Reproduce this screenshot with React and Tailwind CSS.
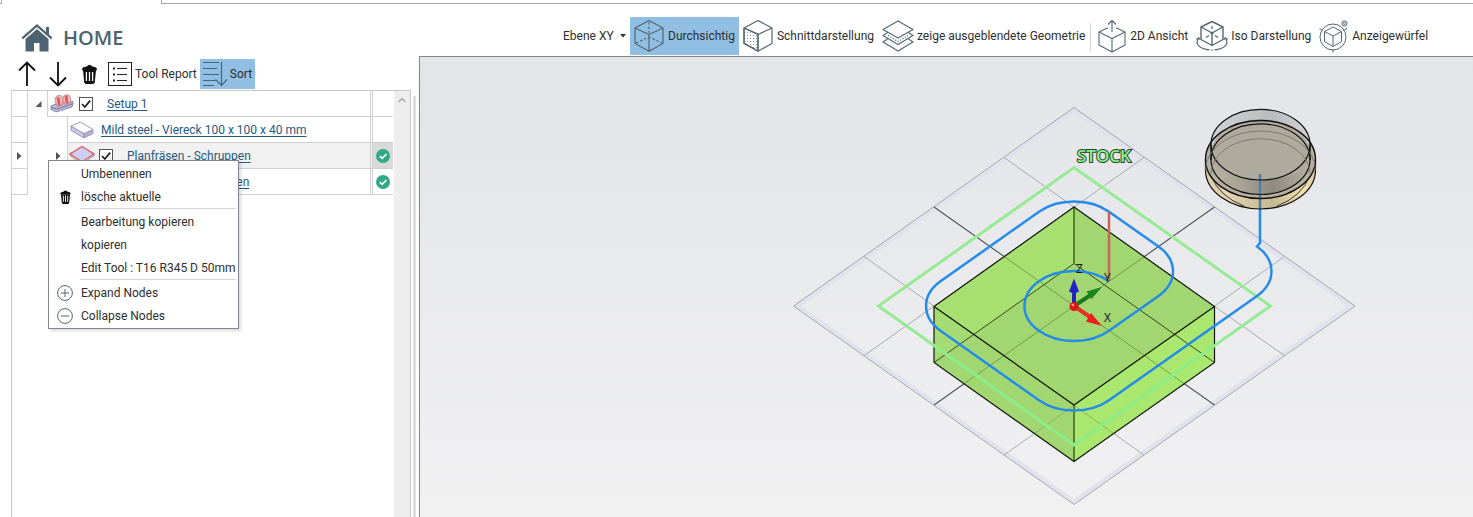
import React from "react";

const SLATE = "#536872";

function HomeIcon() {
  return (
    <svg width="32" height="30" viewBox="0 0 32 30" fill="#4d6470" aria-hidden="true">
      <path d="M16 1 0.5 14.6 2 16.2 16 4 30 16.2 31.5 14.6 28 11.5V4H25V8.9Z" />
      <path d="M16 6 4.5 16V28.5H13V20H18.5V28.5H27.5V16Z" />
    </svg>
  );
}

function ArrowIcon({ down }) {
  return (
    <svg width="18" height="26" viewBox="0 0 18 26" fill="none" stroke="#111" strokeWidth="1.8" aria-hidden="true">
      {down ? <path d="M9 1V24M1 16.5 9 24.5 17 16.5" /> : <path d="M9 25V2M1 9.5 9 1.5 17 9.5" />}
    </svg>
  );
}

function TrashIcon({ small }) {
  return (
    <svg width={small ? 11 : 15} height={small ? 14 : 20} viewBox="0 0 15 20" aria-hidden="true">
      <path d="M5 2.2Q7.5 -.8 10 2.2L14 3.6Q15 4.4 15 6.2H0Q0 4.4 1 3.6Z" fill="#111" />
      <path d="M1 6H14L12.8 18.2Q12.6 20 10.5 20H4.5Q2.4 20 2.2 18.2Z" fill="#111" />
      <path d="M4.4 8V17M7.5 8V17M10.6 8V17" stroke="#fff" strokeWidth="1.3" fill="none" />
    </svg>
  );
}

function ReportIcon() {
  return (
    <svg width="24" height="24" viewBox="0 0 24 24" fill="none" stroke="#222" aria-hidden="true">
      <rect x="0.5" y="0.5" width="23" height="23" />
      <path d="M9 6.5H19M9 12.5H19M9 18.5H19" strokeWidth="1.2" />
      <path d="M5 6.5H7M5 12.5H7M5 18.5H7" strokeWidth="2" />
    </svg>
  );
}

function SortIcon() {
  return (
    <svg width="24" height="26" viewBox="0 0 24 26" fill="none" stroke="#46657c" strokeWidth="1.2" aria-hidden="true">
      <path d="M0 1.5H16M0 7.5H14M0 13.5H16M0 19.5H14M0 24.5H11M18.5 1V24M12.5 18.5 18.5 24.5 24 18.5" />
    </svg>
  );
}

function CubeIcon({ section }) {
  return (
    <svg width="30" height="34" viewBox="0 0 30 34" fill="none" stroke={SLATE} strokeWidth="1.2" strokeLinejoin="round" aria-hidden="true">
      {section && (
        <>
          <defs>
            <pattern id="dots" width="3" height="3" patternUnits="userSpaceOnUse">
              <rect x="1" y="1" width="1" height="1" fill="#8b9aa2" stroke="none" />
            </pattern>
          </defs>
          <path d="M1 9 15 15V32L1 24Z" fill="url(#dots)" />
        </>
      )}
      <path d="M15 1.5 29 9V24.5L15 32.2 1 24.5V9ZM1 9 15 15.5 29 9M15 15.5V32" />
      {!section && <path d="M15 3V14M2 24 15 18 28 24" strokeDasharray="2.5 2" />}
    </svg>
  );
}

function LayersIcon() {
  return (
    <svg width="32" height="32" viewBox="0 0 32 32" fill="none" stroke={SLATE} strokeWidth="1.2" strokeLinejoin="round" aria-hidden="true">
      <path d="M16 1 31 9.5 16 18 1 9.5ZM5.5 12.5 1 15.5 16 24.5 31 15.5 26.5 12.5M5.5 19 1 22 16 31 31 22 26.5 19" />
      <path d="M6 15.5 16 21.5 26 15.5" strokeDasharray="1.2 1.6" />
    </svg>
  );
}

function TopViewIcon() {
  return (
    <svg width="28" height="34" viewBox="0 0 28 34" fill="none" stroke={SLATE} strokeWidth="1.1" strokeLinejoin="round" aria-hidden="true">
      <path d="M10 8.7 1 13V26L14 33 27 26V13L18 8.7M1 13 14 19.5 27 13M14 19.5V33M14 13V1.5M10 5.5 14 1.5 18 5.5" />
    </svg>
  );
}

function IsoIcon() {
  return (
    <svg width="32" height="32" viewBox="0 0 32 32" fill="none" stroke={SLATE} strokeWidth="1.4" strokeLinejoin="round" aria-hidden="true">
      <path d="M16 1.5 27 7V19.5L16 25.5 5 19.5V7ZM5 7 16 13 27 7M16 13V25.5" />
      <path d="M16 6V9M10 17.5 13 15.5M22 17.5 19 15.5" strokeWidth="1.2" />
      <circle cx="16" cy="13" r="1.6" fill={SLATE} stroke="none" />
      <path d="M2.5 18C-1.5 24 3.5 29 13.5 29.8M29.5 18C33.5 24 28.5 29 18.5 29.8M15.3 30H17M0.5 19.5 2.8 17.8 4.2 20M31.5 19.5 29.2 17.8 27.8 20" strokeWidth="1.2" />
    </svg>
  );
}

function ViewCubeIcon() {
  return (
    <svg width="29" height="34" viewBox="0 0 29 34" fill="none" stroke={SLATE} strokeWidth="1" strokeLinejoin="round" aria-hidden="true">
      <circle cx="14" cy="18" r="13" />
      <path d="M14 8 22.5 12.5V22.5L14 27.5 5.5 22.5V12.5ZM5.5 12.5 14 17 22.5 12.5M14 17V27.5M14 30V33.5M0.5 9.5 3.5 11.5M24.5 11.5 28 9.5" />
      <circle cx="25.5" cy="4.5" r="2.6" />
      <circle cx="25.5" cy="4.5" r="1" />
    </svg>
  );
}

function SetupIcon() {
  return (
    <svg width="24" height="19" viewBox="0 0 24 19" aria-hidden="true">
      <path d="M1 12 8 9 23 7.5V10L22 13 6 18 1 15.5Z" fill="#b9b8dd" stroke="#77779b" strokeWidth=".8" />
      <path d="M1.5 13.5 7 15 22.5 10" fill="none" stroke="#66668a" strokeWidth=".8" />
      <path d="M5 4Q7 .5 11 1.5L12.5 4V11L7 12.5Q5 9 5 4Z" fill="#f6bcba" stroke="#a56a70" strokeWidth=".6" />
      <path d="M13 2.5Q15 0 19 1L20.500 3.500V9L15 10.500Q13 7 13 2.500Z" fill="#f6bcba" stroke="#a56a70" strokeWidth=".6" />
      <path d="M6.500 3.500 9.500 3 10.500 11 8 12ZM14.500 2 17.500 1.500 18.500 9 16 10Z" fill="#e4575b" />
    </svg>
  );
}

function StockIcon() {
  return (
    <svg width="24" height="18" viewBox="0 0 24 18" strokeLinejoin="round" aria-hidden="true">
      <path d="M1 5 14 12.500V17L1 9.500Z" fill="#c9c8ea" stroke="#8b8ba6" strokeWidth=".8" />
      <path d="M14 12.500 23 8.500V12.500L14 17Z" fill="#b2b2dc" stroke="#8b8ba6" strokeWidth=".8" />
      <path d="M1 5 10 1 23 8.500 14 12.500Z" fill="#fff" stroke="#8b8ba6" strokeWidth=".8" />
    </svg>
  );
}

function FacingIcon() {
  return (
    <svg width="26" height="19" viewBox="0 0 26 19" strokeLinejoin="round" aria-hidden="true">
      <path d="M1 9.500 13 18.500 25 9.500V7H1Z" fill="#eee" stroke="#8a8a8a" strokeWidth=".8" />
      <path d="M13 0.500 25 8 13 16 1 8Z" fill="#cfcdf1" stroke="#e0525c" strokeWidth="1.2" />
    </svg>
  );
}

function DoneIcon() {
  return (
    <svg width="14" height="14" viewBox="0 0 14 14" role="img" aria-label="OK">
      <circle cx="7" cy="7" r="7" fill="#31a887" />
      <path d="M3.800 7.200 6.200 9.400 10.400 5" fill="none" stroke="#fff" strokeWidth="1.600" />
    </svg>
  );
}

function Triangle({ open }) {
  return (
    <svg width="7" height="8" viewBox="0 0 7 8" fill="#555" aria-hidden="true">
      {open ? <path d="M6.500 1V7H.5Z" /> : <path d="M1 0V8L5.500 4Z" />}
    </svg>
  );
}

function Check({ label }) {
  return (
    <span className="grid h-[14px] w-[14px] shrink-0">
      <input type="checkbox" defaultChecked aria-label={label} className="peer col-start-1 row-start-1 h-[14px] w-[14px] appearance-none border border-[#555] bg-white" />
      <svg viewBox="0 0 14 14" className="pointer-events-none invisible col-start-1 row-start-1 h-[14px] w-[14px] peer-checked:visible" fill="none" stroke="#222" strokeWidth="1.800" aria-hidden="true">
        <path d="M3 7 5.800 10 11.200 3.600" />
      </svg>
    </span>
  );
}

function ToolButton({ icon, children, active, gap = "gap-1" }) {
  return (
    <button type="button" aria-pressed={!!active} className={`flex h-[38px] items-center px-1 whitespace-nowrap ${gap} ${active ? "bg-[#91bfe3]" : ""}`}>
      {icon}
      <span>{children}</span>
    </button>
  );
}

function TreeRow({ level, toggle, icon, check, label, current, done }) {
  const indent = level === 0 ? "ml-[19px]" : "ml-[39px]";
  const toggleWidth = level === 0 ? "w-[19px]" : "w-[39px]";
  return (
    <tr className="h-[26px]">
      <td className="h-[26px] border-x border-b border-[#d0d0d0] p-0">
        <span className="flex justify-center">{current && <Triangle />}</span>
      </td>
      <td className="h-[26px] p-0">
        <div className="grid h-[26px]">
          <span className={`col-start-1 row-start-1 flex items-center justify-end pr-[5px] ${toggleWidth}`}>{toggle}</span>
          <div className={`col-start-1 row-start-1 flex items-center border-b border-l border-[#d0d0d0] pl-px ${indent} ${current ? "bg-[#f1f1f1]" : ""}`}>
            <span className="flex w-[26px] shrink-0 justify-center">{icon}</span>
            {check && (
              <span className="mr-[8px] ml-1">
                <Check label={label} />
              </span>
            )}
            <a href="#" className="ml-[6px] whitespace-nowrap text-[#27597f] underline underline-offset-2">
              {label}
            </a>
          </div>
        </div>
      </td>
      <td className={`h-[26px] border-x border-b border-[#d0d0d0] p-0 ${current ? "bg-[#f1f1f1]" : ""}`} />
      <td className={`h-[26px] border-b border-[#d0d0d0] p-0 ${current ? "bg-[#d9d9d9]" : ""}`}>
        <span className="flex justify-center">{done && <DoneIcon />}</span>
      </td>
    </tr>
  );
}

function MenuItem({ icon, children }) {
  return (
    <button type="button" role="menuitem" className="flex h-[23px] w-full items-center text-left whitespace-nowrap">
      <span className="flex w-8 shrink-0 justify-center">{icon}</span>
      {children}
    </button>
  );
}

function CircleSign({ plus }) {
  return (
    <svg width="16" height="16" viewBox="0 0 16 16" fill="none" stroke={SLATE} aria-hidden="true">
      <circle cx="8" cy="8" r="7.400" />
      <path d={plus ? "M4 8H12M8 4V12" : "M4 8H12"} />
    </svg>
  );
}

function ContextMenu() {
  return (
    <div role="menu" className="absolute top-[69px] left-[36px] z-10 w-[191px] border border-[#84848e] bg-white py-px shadow-[2px_2px_3px_rgba(0,0,0,0.15)]">
      <MenuItem>Umbenennen</MenuItem>
      <MenuItem icon={<TrashIcon small />}>lösche aktuelle</MenuItem>
      <div role="separator" className="mr-[2px] ml-[31px] h-[2px] border-t border-[#d4d4d4]" />
      <MenuItem>Bearbeitung kopieren</MenuItem>
      <MenuItem>kopieren</MenuItem>
      <MenuItem>Edit Tool : T16 R345 D 50mm</MenuItem>
      <div role="separator" className="mr-[2px] ml-[31px] h-[2px] border-t border-[#d4d4d4]" />
      <MenuItem icon={<CircleSign plus />}>Expand Nodes</MenuItem>
      <MenuItem icon={<CircleSign />}>Collapse Nodes</MenuItem>
    </div>
  );
}

function Scene() {
  const toolPath =
    "M1260 209V243L1257 246.500A49.500 35 0 0 1 1257 296L1109 400.300A49.500 35 0 0 1 1039 400.300L940.500 330.700A49.500 35 0 0 1 940.500 281.300L1039 211.700A49.500 35 0 0 1 1109 211.700L1158.500 246.500A49.500 35 0 0 1 1158.500 296L1109 330.700A49.500 35 0 1 1 1109 281.300";
  const silhouette = "M934 306.500 1074 207 1214.500 306.500V362.500L1074 461.500 934 362.500Z";
  return (
    <svg viewBox="420 57 1053 460" preserveAspectRatio="xMidYMin slice" className="block h-full w-full" role="img" aria-label="3D">
      <defs>
        <clipPath id="block">
          <path d={silhouette} />
        </clipPath>
        <linearGradient id="tan" x1="0" x2="1">
          <stop offset="0" stopColor="#d9c9a6" />
          <stop offset=".2" stopColor="#e3d4b2" />
          <stop offset=".6" stopColor="#c6b795" />
          <stop offset=".9" stopColor="#f2e2b0" />
          <stop offset="1" stopColor="#d8c79b" />
        </linearGradient>
        <linearGradient id="steel" x1="0" x2="1">
          <stop offset="0" stopColor="#d2d5d8" />
          <stop offset=".6" stopColor="#b9bbbd" />
          <stop offset="1" stopColor="#d0d2d4" />
        </linearGradient>
        <linearGradient id="body" x1="0" x2="1">
          <stop offset="0" stopColor="#b7b1a2" />
          <stop offset=".3" stopColor="#a9a394" />
          <stop offset=".62" stopColor="#8f897f" />
          <stop offset="1" stopColor="#b7b0a0" />
        </linearGradient>
      </defs>

      <path d="M1074 110.500 1350.500 306 1074 501.500 797.500 306Z" fill="none" stroke="#e2e1ee" strokeWidth="4" />
      <path d="M1074 107.500 1355 306 1074 504.500 793.500 306Z" fill="none" stroke="#a6a6ac" />
      <path d="M1004 157.500 1284.500 355.700M864 256.500 1144 455M1144 157.500 864 355.700M1284.500 256.500 1004 455" stroke="#a9abad" />
      <path d="M934 207 1214.500 405M1214.500 207 934 405" stroke="#55585a" strokeWidth="1.200" />

      <path d={silhouette} fill="#a1d671" />
      <path d="M934 306.500 1074 207V263.500L934 362.500Z" fill="#a7e070" />
      <path d="M934 306.500 973.500 334.500 934 362.500Z" fill="#a5db75" />
      <path d="M1074 405 1214.500 306.500V362.500L1074 461.500Z" fill="#aae76f" />
      <g clipPath="url(#block)" fill="none" stroke="#6f9e48">
        <path d="M934 207 1214.500 405M1214.500 207 934 405" />
        <path d="M864 256.500 1144 455M1284.500 256.500 1004 455" stroke="#86b55c" />
      </g>
      <path d="M934 362.500 1074 263.500 1214.500 362.500" fill="none" stroke="#34481f" />
      <path d="M1074 207V263.500M1074 405V461.500" stroke="#55822f" strokeWidth="2" />
      <path d={silhouette} fill="none" stroke="#10160c" strokeWidth="1.200" />
      <path d="M934 306.500 1074 405 1214.500 306.500" fill="none" stroke="#10160c" strokeWidth="1.200" />

      <path d="M1074 167.500 1270.500 306 1074 445 878.500 306Z" fill="none" stroke="#97ea94" strokeWidth="3" />
      <path d="M1214.500 345.600 1074 445 934 345.600" fill="none" stroke="#8cec86" strokeWidth="3" />
      <path d={toolPath} fill="none" stroke="#258bea" strokeWidth="2.500" />
      <path d="M1109 212V281" stroke="#c8625a" strokeWidth="2.500" />

      <path d="M1205.500 159.500V170A55 39 0 0 0 1315.500 170V159.500Z" fill="url(#tan)" />
      <ellipse cx="1260.500" cy="159.500" rx="55" ry="39" fill="#b5b0a1" />
      <path d="M1211 144.700A49.500 35.300 0 0 1 1310 144.700V159.700A49.500 35 0 0 0 1211 159.700Z" fill="url(#steel)" />
      <path d="M1211 144.700V159.700A49.500 35 0 0 0 1310 159.700V144.700Z" fill="url(#body)" />
      <path d="M1211 154A49.500 35 0 0 1 1310 154Q1307 179 1260.500 180Q1214 179 1211 154Z" fill="#aeaa9e" />
      <path d="M1260 174V209" stroke="#557f9e" strokeWidth="2.500" />
      <g fill="none" stroke="#111" strokeWidth="1.200">
        <ellipse cx="1260.500" cy="144.700" rx="49.500" ry="35.300" />
        <ellipse cx="1260.500" cy="159.200" rx="49.500" ry="35.300" />
        <ellipse cx="1260.500" cy="159.500" rx="55" ry="39" strokeWidth="1.400" />
        <path d="M1205.500 159.500V170A55 39 0 0 0 1315.500 170V159.500M1211 144.700V160M1310 144.700V160" />
        <path d="M1211 176Q1220 197 1244 206M1310 176Q1301 197 1277 206" strokeWidth=".8" />
      </g>
      <g fill="none" stroke="#77756c" strokeWidth=".9">
        <path d="M1205.500 170A55 39 0 0 1 1315.500 170M1211 173.700A49.500 35 0 0 1 1310 173.700" />
      </g>

      <path d="M1074 306V290" stroke="#2424b8" strokeWidth="4" />
      <path d="M1074 278.500 1079 291.500Q1074 295 1069 291.500Z" fill="#2222cc" />
      <path d="M1074 306 1090 295.500" stroke="#1c7a1c" strokeWidth="4" />
      <path d="M1102 287 1091.500 299 1086.500 291.500Z" fill="#1b861f" />
      <path d="M1074 306 1090 317" stroke="#dd3324" strokeWidth="4" />
      <path d="M1102 326 1086 321.500 1091 313Z" fill="#f01d1d" />
      <circle cx="1074" cy="306.500" r="4.500" fill="#e01616" />
      <circle cx="1072.800" cy="305" r="1.300" fill="#ff9a9a" />

      <g fontFamily="'Open Sans', sans-serif" fontSize="12" fill="#151515">
        <text x="1076" y="273">Z</text>
        <text x="1104" y="282">Y</text>
        <text x="1104" y="322">X</text>
      </g>
      <text x="1077" y="162" fontFamily="'Open Sans', sans-serif" fontSize="17" fontWeight="600" fill="#8ff08f" stroke="#26452a" strokeWidth="2" paintOrder="stroke">
        STOCK
      </text>
    </svg>
  );
}

export default function App() {
  return (
    <div className="flex min-h-screen flex-col bg-white font-[Roboto,sans-serif] text-[12px] leading-4 text-[#2e2e2e]">
      <div className="flex h-1 shrink-0">
        <div className="w-[2px] border-r border-b border-[#a9a9a9]" />
        <div className="w-[159px]" />
        <div className="flex-1 border-b border-l border-[#a9a9a9]" />
      </div>

      <div className="flex flex-1">
        <aside className="flex w-[419px] shrink-0 flex-col">
          <header className="flex h-[55px] items-center gap-[10px] pt-[13px] pl-[21px]">
            <HomeIcon />
            <h1 className="font-['Open_Sans',sans-serif] text-[20px] leading-6 font-semibold text-[#4d6470]">HOME</h1>
          </header>

          <div className="flex h-[31px] items-start pl-[11px]">
            <div className="flex h-[30px] items-center">
              <button type="button" aria-label="Nach oben" className="flex w-[31px] justify-center"><ArrowIcon /></button>
              <button type="button" aria-label="Nach unten" className="flex w-[31px] justify-center"><ArrowIcon down /></button>
              <button type="button" aria-label="Löschen" className="flex w-8 justify-center"><TrashIcon /></button>
              <button type="button" className="flex h-[30px] items-center gap-[3px] px-[3px] whitespace-nowrap"><ReportIcon />Tool Report</button>
              <button type="button" className="flex h-[30px] items-center gap-[3px] bg-[#91bfe3] px-[3px] whitespace-nowrap"><SortIcon />Sort</button>
            </div>
          </div>

          <div className="flex flex-1">
            <section className="relative ml-[11px] flex w-[400px] border-t border-r border-l border-[#c8c8c8]">
              <div className="-ml-px flex-1">
                <table className="w-full table-fixed border-separate border-spacing-0">
                  <colgroup>
                    <col className="w-[17px]" />
                    <col />
                    <col className="w-[3px]" />
                    <col className="w-[20px]" />
                  </colgroup>
                  <tbody>
                    <TreeRow level={0} toggle={<Triangle open />} icon={<SetupIcon />} check label="Setup 1" />
                    <TreeRow level={1} icon={<StockIcon />} label="Mild steel - Viereck 100 x 100 x 40 mm" />
                    <TreeRow level={1} toggle={<Triangle />} icon={<FacingIcon />} check label="Planfräsen - Schruppen" current done />
                    <TreeRow level={1} toggle={<Triangle />} icon={<FacingIcon />} check label="Planfräsen - Schlichten" done />
                  </tbody>
                </table>
              </div>
              <div className="ml-px flex w-4 justify-center bg-[#eeeeee] pt-[6px]">
                <svg width="8" height="6" viewBox="0 0 8 6" fill="none" stroke="#a8a8a8" strokeWidth="1.500" aria-hidden="true">
                  <path d="M.5 5 4 1.500 7.500 5" />
                </svg>
              </div>
              <ContextMenu />
            </section>
            <div className="mt-[6px] ml-[2px] w-[3px] bg-[#dedede]" />
          </div>
        </aside>

        <main className="flex min-w-0 flex-1 flex-col">
          <nav className="flex h-[52px] shrink-0 items-end pb-px pl-[144px]">
            <label className="flex h-[38px] items-center gap-[6px] pr-1">
              <select aria-label="Ebene" className="appearance-none bg-transparent">
                <option>Ebene XY</option>
              </select>
              <svg width="6" height="4" viewBox="0 0 6 4" fill="#333" aria-hidden="true"><path d="M0 0H6L3 3.500Z" /></svg>
            </label>
            <ToolButton active icon={<CubeIcon />}>Durchsichtig</ToolButton>
            <ToolButton icon={<CubeIcon section />}>Schnittdarstellung</ToolButton>
            <ToolButton gap="gap-[3px]" icon={<LayersIcon />}>zeige ausgeblendete Geometrie</ToolButton>
            <div className="mr-[3px] mb-1 ml-px h-7 w-px bg-[#cdd2d6]" />
            <ToolButton icon={<TopViewIcon />}>2D Ansicht</ToolButton>
            <ToolButton gap="gap-[3px]" icon={<IsoIcon />}>Iso Darstellung</ToolButton>
            <ToolButton icon={<ViewCubeIcon />}>Anzeigewürfel</ToolButton>
          </nav>
          <div className="relative flex-1 border-t border-l border-[#85858a] bg-linear-to-b from-[#e3e4e8] to-[#f1f1f2]">
            <div className="absolute inset-0">
              <Scene />
            </div>
          </div>
        </main>
      </div>
    </div>
  );
}
